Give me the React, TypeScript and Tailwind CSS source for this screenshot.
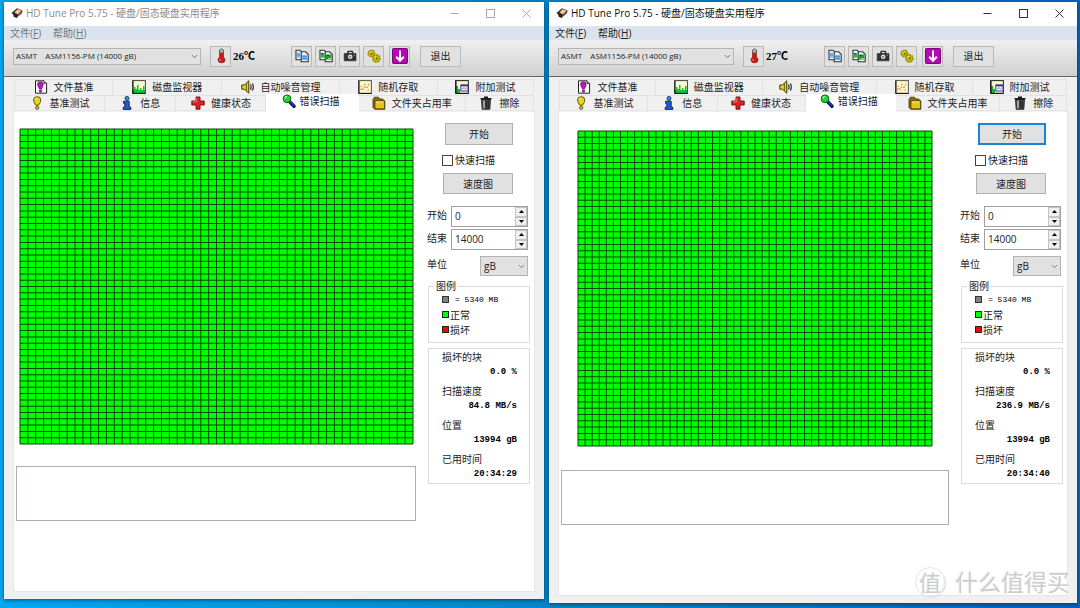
import { useId } from "react"
import type { ReactNode } from "react"
import { ChevronDown } from "lucide-react"

const GRID_SIZE = 50

interface HdTuneWindowProps {
  active?: boolean
  temperature: string
  speed: string
  elapsed: string
  mapClass: string
  logClass: string
}

function DiskIcon() {
  return (
    <svg className="h-3 w-3 shrink-0" viewBox="0 0 12 12" aria-hidden="true">
      <path d="M0.5 6 L6 1.2 L11.6 3.4 L11 6 L5.6 11 L2.6 9.8 L2.2 7.4 Z" fill="#2c2522" />
      <path d="M3.2 5.6 L6.6 2 L11 3.6 L7.2 7.8 Z" fill="#e0a46c" />
      <path d="M4.6 5.2 L6.8 3 L9 3.8 L6.8 6.2 Z" fill="#f4d9b8" />
      <path d="M6 10 L10.8 5.6" stroke="#8a7a70" strokeWidth="0.8" />
    </svg>
  )
}

function ThermometerIcon() {
  return (
    <svg className="h-4 w-3" viewBox="0 0 12 16" aria-hidden="true">
      <path d="M4.6 2.5 Q4.6 1 6.5 1 Q8.4 1 8.4 2.5 V9 Q10 10 10 11.8 Q10 14.8 6.5 14.8 Q3 14.8 3 11.8 Q3 10 4.6 9 Z" fill="#d81414" stroke="#5a2020" strokeWidth="0.7" />
      <path d="M5 2.6 Q5 1.3 6.5 1.3 Q8 1.3 8 2.6 V4.5 H5 Z" fill="#6fd3dc" />
      <path d="M5.2 11 Q4.6 12 5.4 13" stroke="#ff9a9a" strokeWidth="1" fill="none" />
    </svg>
  )
}

function CopyIcon({ picture = false }: { picture?: boolean }) {
  return (
    <svg className="h-[14px] w-[14px]" viewBox="0 0 14 14" aria-hidden="true">
      <path d="M1 1.2 H5 L7 3 V10.8 H1 Z" fill="#f2f6fc" stroke="#333" strokeWidth="1.1" />
      <path d="M6.2 2.8 H10.6 L13.2 5.3 V12.8 H6.2 Z" fill="#f2f6fc" stroke="#333" strokeWidth="1.1" />
      {picture ? (
        <>
          <rect x="1.8" y="4" width="3.9" height="4.6" fill="#2eb82e" />
          <rect x="7" y="5.6" width="5.4" height="5" fill="#1e9a2c" />
          <path d="M2 4.6 H4 M8 6.4 H10" stroke="#174a7a" strokeWidth="1.2" />
          <path d="M9 9.6 H12" stroke="#d8e85a" strokeWidth="0.9" />
        </>
      ) : (
        <>
          <rect x="1.9" y="3.6" width="3.6" height="5" fill="#7db8f4" />
          <rect x="7.2" y="5.8" width="5" height="5.4" fill="#7db8f4" />
          <path d="M7.2 7.6 H12.2 M7.2 9.6 H12.2 M1.9 6 H5.5" stroke="#3a86dc" strokeWidth="0.8" />
        </>
      )}
    </svg>
  )
}

function CameraIcon() {
  return (
    <svg className="h-[14px] w-[14px]" viewBox="0 0 14 14" aria-hidden="true">
      <path d="M1.2 4.6 H4.2 L5 2 H9.6 L10.2 4.6 H13 V11.8 H1.2 Z" fill="#333" stroke="#222" strokeWidth="0.6" strokeLinejoin="round" />
      <circle cx="7.2" cy="7.8" r="2.3" fill="#dedede" />
      <circle cx="7.2" cy="7.8" r="1" fill="#777" />
      <rect x="5.9" y="2.9" width="2.8" height="1.2" fill="#ddd" />
      <rect x="10.8" y="5.6" width="1.2" height="1.2" fill="#3fc04a" />
    </svg>
  )
}

function GearsIcon() {
  return (
    <svg className="h-[14px] w-[14px]" viewBox="0 0 14 14" aria-hidden="true">
      <circle cx="4.4" cy="4.4" r="3.2" fill="#cdb90a" stroke="#9c8e06" strokeWidth="1.6" strokeDasharray="2 0.6" />
      <circle cx="9.4" cy="9.4" r="3.5" fill="#d2be08" stroke="#9c8e06" strokeWidth="1.8" strokeDasharray="2 0.6" />
      <path d="M2.4 3.8 L4.6 2.4 M7 8.6 L9.2 7" stroke="#f0e468" strokeWidth="1" />
      <circle cx="4.6" cy="4.8" r="0.9" fill="#5e5402" />
      <circle cx="9.8" cy="9.6" r="1" fill="#5e5402" />
    </svg>
  )
}

function DownIcon() {
  return (
    <svg className="h-4 w-4" viewBox="0 0 16 16" aria-hidden="true">
      <rect x="0.5" y="0.5" width="15" height="15" rx="0.8" fill="#b408b4" stroke="#7a067a" />
      <path d="M8 2.5 V12.5 M4.2 8.8 L8 12.8 L11.8 8.8" stroke="#fff" strokeWidth="2" fill="none" />
    </svg>
  )
}

// タブのアイコン
const tabIcons = {
  fileBenchmark: (
    <>
      <path d="M1.5 0.8 H10 L12.6 3.4 V13.2 H1.5 Z" fill="#fff" stroke="#222" />
      <path d="M10 0.8 V3.4 H12.6" fill="#aaa" stroke="#222" strokeWidth="0.8" />
      <path d="M3.6 4 Q3.6 1.8 6.4 1.8 Q9.2 1.8 9.2 4 Q9.2 6 7.4 9 H5.5 Q3.6 6 3.6 4 Z" fill="#c018c8" stroke="#4c0a50" strokeWidth="0.7" />
      <circle cx="6.5" cy="11.1" r="1.4" fill="#c018c8" stroke="#4c0a50" strokeWidth="0.5" />
    </>
  ),
  diskMonitor: (
    <>
      <rect x="0.6" y="0.6" width="12.8" height="12.8" fill="#fafbd0" stroke="#444" />
      <path d="M1 10 H13 V13 H1 Z" fill="#1a6fc4" />
      <path d="M2 13 V7 H3.5 V9 H5 V5 H6.5 V10 H8 V8 H9.5 V10 H11 V6 H12.5 V13 Z" fill="#18c428" />
      <path d="M1 1 V13.4 H13.4" stroke="#111" fill="none" />
    </>
  ),
  noise: (
    <>
      <path d="M0.8 5 H3.4 L7.8 0.8 V13.2 L3.4 9.2 H0.8 Z" fill="#e8d818" stroke="#3c3600" strokeWidth="1" />
      <path d="M5.4 3.4 V10.8" stroke="#6d6400" strokeWidth="1" />
      <path d="M9.4 4.5 Q10.8 7 9.4 9.5 M11.2 3.4 Q13.6 7 11.2 10.6" stroke="#444" strokeWidth="1.4" fill="none" />
    </>
  ),
  random: (
    <>
      <rect x="0.6" y="0.6" width="12.8" height="12.8" fill="#fdf8c4" stroke="#555" />
      <path d="M2 10 L4 8 L5 10 L7 6 L9 8 L11.5 3" stroke="#e05050" strokeDasharray="1 0.8" fill="none" />
      <path d="M2.5 6.5 H4 M6 4.5 H7.5 M9.5 10 H11" stroke="#e0902a" strokeWidth="1.2" />
      <path d="M1 1 V13.4 H13.4" stroke="#111" fill="none" />
    </>
  ),
  extra: (
    <>
      <rect x="0.6" y="0.6" width="12.8" height="12.8" fill="#f6f7c8" stroke="#222" />
      <path d="M1 13 V6 H3 V9 H5 V13 Z" fill="#18b428" />
      <rect x="5.8" y="5" width="7.2" height="6" fill="#f4f0ff" stroke="#2848a8" />
      <path d="M6 5.5 H13" stroke="#283878" strokeWidth="1.6" />
      <path d="M7 9 L9 7.6 L10.5 9 L12 7.6" stroke="#e04070" fill="none" strokeWidth="0.8" />
      <path d="M1 1 V13.4 H13.4" stroke="#111" fill="none" />
    </>
  ),
  benchmark: (
    <>
      <path d="M3.6 3.8 Q3.6 0.7 7.2 0.7 Q10.8 0.7 10.8 3.8 Q10.8 6.4 8.6 9.2 H5.8 Q3.6 6.4 3.6 3.8 Z" fill="#e8d610" stroke="#4e4600" strokeWidth="0.9" />
      <circle cx="7.2" cy="11.8" r="1.6" fill="#e8d610" stroke="#4e4600" strokeWidth="0.9" />
      <path d="M5.4 3.2 Q5.8 2 7 2" stroke="#fffbc0" fill="none" />
    </>
  ),
  info: (
    <>
      <circle cx="7" cy="2.4" r="2" fill="#2a96ec" stroke="#0a2450" strokeWidth="0.8" />
      <path d="M3.6 5.2 H9.2 V11.2 H10.8 V13.4 H3.2 V11.2 H4.8 V7.4 H3.6 Z" fill="#1c5ce0" stroke="#0a1c48" strokeWidth="0.9" />
    </>
  ),
  health: (
    <>
      <path d="M5 1 H9 V5 H13.2 V9 H9 V13.2 H5 V9 H0.8 V5 H5 Z" fill="#dc2222" stroke="#6a1010" strokeWidth="0.9" />
      <path d="M5.8 2 V5.8 H2" stroke="#ff8c8c" strokeWidth="0.8" fill="none" />
    </>
  ),
  errorScan: (
    <>
      <path d="M7.6 7.6 L12 12.2" stroke="#080c50" strokeWidth="3.4" strokeLinecap="round" />
      <path d="M8.4 8 L12 11.8" stroke="#2448d0" strokeWidth="1.2" strokeLinecap="round" />
      <circle cx="5" cy="4.8" r="3.9" fill="#1fd62c" stroke="#134a18" strokeWidth="0.9" />
      <path d="M2.8 4.4 Q3.2 2.6 5 2.4" stroke="#c4ffc8" strokeWidth="1.1" fill="none" />
    </>
  ),
  folder: (
    <>
      <path d="M1 3.6 L2.4 1.2 H6.4 L7.6 3 H11 V5 H12.8 V13.2 H3 L1 11.6 Z" fill="#8a7000" stroke="#3c3000" strokeWidth="0.8" />
      <rect x="3" y="4.8" width="9.6" height="8" fill="#e6c41c" stroke="#4e4000" strokeWidth="0.8" />
      <path d="M4 6 H11" stroke="#fbeb8c" />
    </>
  ),
  erase: (
    <>
      <path d="M1.5 2.8 H12.5 M5 1.2 H9" stroke="#1a1a1a" strokeWidth="1.5" />
      <path d="M2.6 3.6 H11.4 L10.8 13.2 H3.2 Z" fill="#555" stroke="#111" strokeWidth="0.9" />
      <path d="M5 4.6 V12.4" stroke="#ddd" strokeWidth="1.1" />
      <path d="M7.2 4.6 V12.4 M9.2 4.6 V12.4" stroke="#161616" strokeWidth="1" />
    </>
  ),
}

interface TabProps {
  icon: keyof typeof tabIcons
  selected?: boolean
  children: ReactNode
}

function Tab({ icon, selected = false, children }: TabProps) {
  return (
    <button
      type="button"
      role="tab"
      aria-selected={selected}
      className={
        selected
          ? "relative -mt-px flex items-center justify-center gap-1 whitespace-nowrap bg-white pr-1 pb-1"
          : "flex items-center justify-center gap-1.5 whitespace-nowrap border-t border-r border-[#e2e2e2] bg-[#f0f0f0] pb-0.5"
      }
    >
      <svg className="h-[14px] w-[14px] shrink-0" viewBox="0 0 14 14" aria-hidden="true">
        {tabIcons[icon]}
      </svg>
      <span>{children}</span>
    </button>
  )
}

function ToolButton({ label, children }: { label: string; children: ReactNode }) {
  return (
    <button
      type="button"
      aria-label={label}
      className="flex h-[21px] w-[21px] shrink-0 items-center justify-center border border-[#b9b9b9] bg-[#e1e1e1]"
    >
      {children}
    </button>
  )
}

function BlockMap({ className }: { className: string }) {
  const lines = Array.from({ length: GRID_SIZE + 1 }, (_, i) => `M${i} 0V${GRID_SIZE}M0 ${i}H${GRID_SIZE}`).join("")

  return (
    <div className={className}>
      <svg
        className="block h-[315px] w-full overflow-visible bg-[#00ff00]"
        viewBox={`0 0 ${GRID_SIZE} ${GRID_SIZE}`}
        preserveAspectRatio="none"
        aria-hidden="true"
      >
        <path d={lines} stroke="#004a00" strokeWidth="1" vectorEffect="non-scaling-stroke" fill="none" />
      </svg>
    </div>
  )
}

function SpinField({ label, value }: { label: string; value: string }) {
  const id = useId()

  return (
    <div className="flex h-[21px] items-center">
      <label htmlFor={id} className="w-6 shrink-0 whitespace-nowrap pb-1">{label}</label>
      <div className="flex h-full min-w-0 flex-1 border border-[#a0a0a0] bg-white">
        <input id={id} type="text" defaultValue={value} className="w-full min-w-0 flex-1 px-[3px] pb-0.5 text-[10px] text-[#222] outline-none" />
        <div className="flex w-3 shrink-0 flex-col">
          <button type="button" aria-label={`${label} +`} className="flex flex-1 items-center justify-center border border-[#c4c4c4] bg-[#f0f0f0]">
            <svg className="h-[3px] w-[5px]" viewBox="0 0 5 3" aria-hidden="true"><path d="M0 3 L2.5 0 L5 3 Z" /></svg>
          </button>
          <button type="button" aria-label={`${label} -`} className="flex flex-1 items-center justify-center border border-[#c4c4c4] bg-[#f0f0f0]">
            <svg className="h-[3px] w-[5px]" viewBox="0 0 5 3" aria-hidden="true"><path d="M0 0 L2.5 3 L5 0 Z" /></svg>
          </button>
        </div>
      </div>
    </div>
  )
}

function Stat({ label, value }: { label: string; value: string }) {
  return (
    <div>
      <dt className="leading-4">{label}</dt>
      <dd className="text-right font-['Liberation_Mono',monospace] text-[9px] leading-[14px] font-bold text-black">{value}</dd>
    </div>
  )
}

function HdTuneWindow({ active = false, temperature, speed, elapsed, mapClass, logClass }: HdTuneWindowProps) {
  const id = useId()
  const titleColor = active ? "text-[#111]" : "text-[#8c8c8c]"
  const menuColor = active ? "text-[#222]" : "text-[#777]"
  const controlColor = active ? "text-[#333]" : "text-[#a8a8a8]"

  return (
    <section className="min-w-0 bg-[#f0f0f0] text-[10px] leading-[14px] text-[#222] shadow-[0_1px_4px_rgba(0,0,0,0.5)]">
      <header className={`flex h-6 items-center bg-white pb-0.5 ${titleColor}`}>
        <div className="flex min-w-0 flex-1 items-center gap-[3px] pl-[7px]">
          <DiskIcon />
          <h1 className="truncate">HD Tune Pro 5.75 - 硬盘/固态硬盘实用程序</h1>
        </div>
        <div className={`flex h-full ${controlColor}`}>
          <button type="button" aria-label="最小化" className="flex w-9 items-center justify-center">
            <svg className="h-[9px] w-[9px]" viewBox="0 0 9 9" fill="none" stroke="currentColor"><path d="M0.5 4.5 H8.5" /></svg>
          </button>
          <button type="button" aria-label="最大化" className="flex w-9 items-center justify-center">
            <svg className="h-[9px] w-[9px]" viewBox="0 0 9 9" fill="none" stroke="currentColor"><rect x="0.5" y="0.5" width="8" height="8" /></svg>
          </button>
          <button type="button" aria-label="关闭" className="flex w-9 items-center justify-center">
            <svg className="h-[9px] w-[9px]" viewBox="0 0 9 9" fill="none" stroke="currentColor"><path d="M0.5 0.5 L8.5 8.5 M8.5 0.5 L0.5 8.5" /></svg>
          </button>
        </div>
      </header>

      <nav className={`flex h-[14px] gap-3 bg-[#dbe3ee] pl-1.5 ${menuColor}`}>
        <button type="button">文件(<u>F</u>)</button>
        <button type="button">帮助(<u>H</u>)</button>
      </nav>

      <div className="flex h-[37px] items-center border-b border-[#666] bg-linear-to-b from-[#f0f0f0] to-[#d0d0d0] pr-[83px] pb-1 pl-[9px]">
        <div className="relative min-w-0 flex-1">
          <select aria-label="硬盘" className="block h-[17px] w-full appearance-none border border-[#b4b4b4] bg-[#e1e1e1] px-0.5 text-[8px]">
            <option>{"ASMT\u00a0\u00a0\u00a0\u00a0ASM1156-PM (14000 gB)"}</option>
          </select>
          <ChevronDown className="pointer-events-none absolute top-1 right-0.5 h-[9px] w-[9px] text-[#555]" />
        </div>
        <div className="ml-[9px] flex w-[81px] shrink-0 items-center gap-0.5">
          <ToolButton label="温度"><ThermometerIcon /></ToolButton>
          <span className="font-['Liberation_Serif','Noto_Sans_CJK_SC',serif] text-[11px] font-bold text-black">{temperature}</span>
        </div>
        <div className="flex shrink-0 gap-[3px]">
          <ToolButton label="复制文本"><CopyIcon /></ToolButton>
          <ToolButton label="复制图像"><CopyIcon picture /></ToolButton>
          <ToolButton label="截图"><CameraIcon /></ToolButton>
          <ToolButton label="选项"><GearsIcon /></ToolButton>
        </div>
        <div className="ml-[5px] flex shrink-0 gap-2.5">
          <ToolButton label="保存"><DownIcon /></ToolButton>
          <button type="button" className="h-[21px] w-[41px] border border-[#b9b9b9] bg-[#e1e1e1]">退出</button>
        </div>
      </div>

      <div className="px-2.5 pt-0.5 pb-2">
        <div role="tablist" className="border-l border-[#e2e2e2]">
          <div className="grid h-4 grid-cols-[98fr_109fr_117fr_98fr_96fr]">
            <Tab icon="fileBenchmark">文件基准</Tab>
            <Tab icon="diskMonitor">磁盘监视器</Tab>
            <Tab icon="noise">自动噪音管理</Tab>
            <Tab icon="random">随机存取</Tab>
            <Tab icon="extra">附加测试</Tab>
          </div>
          <div className="grid h-4 grid-cols-[90fr_71fr_90fr_92fr_107fr_68fr]">
            <Tab icon="benchmark">基准测试</Tab>
            <Tab icon="info">信息</Tab>
            <Tab icon="health">健康状态</Tab>
            <Tab icon="errorScan" selected>错误扫描</Tab>
            <Tab icon="folder">文件夹占用率</Tab>
            <Tab icon="erase">擦除</Tab>
          </div>
        </div>

        <div role="tabpanel" className="flex bg-white pr-1 pb-[70px] outline outline-[#e6e6e6]">
          <div className="min-w-0 flex-1">
            <BlockMap className={mapClass} />
            <div className={`mr-[11px] ml-0.5 h-[55px] border border-[#a9adb5] bg-white ${logClass}`} />
          </div>

          <div className="w-[103px] shrink-0 pt-3">
            <div className="flex flex-col pl-4">
              <button
                type="button"
                className={
                  active
                    ? "ml-0.5 h-[22px] w-[68px] border-2 border-[#1883d7] bg-[#e1e1e1]"
                    : "ml-0.5 h-[22px] w-[68px] border border-[#b0b0b0] bg-[#e1e1e1]"
                }
              >
                开始
              </button>
              <label className="mt-2 -ml-px flex items-center gap-0.5">
                <input type="checkbox" className="h-[11px] w-[11px] appearance-none border border-[#444] bg-white" />
                快速扫描
              </label>
              <button type="button" className="mt-1.5 h-[21px] w-[70px] border border-[#b0b0b0] bg-[#e1e1e1]">速度图</button>
            </div>

            <div className="mt-3 flex flex-col gap-0.5 pr-0.5">
              <SpinField label="开始" value="0" />
              <SpinField label="结束" value="14000" />
            </div>

            <div className="mt-1.5 flex h-5 items-center justify-between pr-0.5">
              <label htmlFor={`${id}-unit`} className="pb-1">单位</label>
              <div className="relative">
                <select id={`${id}-unit`} className="block h-5 w-12 appearance-none border border-[#b4b4b4] bg-[#e1e1e1] px-[3px] text-[10px]">
                  <option>gB</option>
                </select>
                <ChevronDown className="pointer-events-none absolute top-1.5 right-0.5 h-[9px] w-[9px] text-[#555]" />
              </div>
            </div>

            <fieldset className="mt-[3px] ml-px h-16 border border-[#dcdcdc] pl-[13px]">
              <legend className="-ml-2 bg-white px-0.5">图例</legend>
              <ul className="-mt-px">
                <li className="flex h-[15px] items-center gap-1.5 whitespace-pre font-['Liberation_Mono',monospace] text-[8px] text-black">
                  <span className="h-[7px] w-[7px] border border-[#333] bg-[#808080]" />= 5340 MB
                </li>
                <li className="flex h-[15px] items-center gap-px">
                  <span className="h-[7px] w-[7px] border border-[#222] bg-[#00ff00]" />正常
                </li>
                <li className="flex h-[15px] items-center gap-px">
                  <span className="h-[7px] w-[7px] border border-[#222] bg-[#ff0000]" />损坏
                </li>
              </ul>
            </fieldset>

            <dl className="mt-[5px] ml-px flex flex-col gap-1 border border-[#dcdcdc] pr-3 pb-0.5 pl-[13px]">
              <Stat label="损坏的块" value="0.0 %" />
              <Stat label="扫描速度" value={speed} />
              <Stat label="位置" value="13994 gB" />
              <Stat label="已用时间" value={elapsed} />
            </dl>
          </div>
        </div>
      </div>
    </section>
  )
}

export default function App() {
  return (
    <main className="relative grid min-h-screen grid-cols-[540fr_528fr] items-start gap-[5px] bg-linear-to-r from-[#00a8f4] via-[#0487cc] to-[#0464c4] pt-0.5 pr-[3px] pb-1 pl-1 font-['Open_Sans','Noto_Sans_CJK_SC',sans-serif]">
      <HdTuneWindow
        temperature="26℃"
        speed="84.8 MB/s"
        elapsed="20:34:29"
        mapClass="mt-[18px] mr-[14px] ml-1.5"
        logClass="mt-[22px]"
      />
      <HdTuneWindow
        active
        temperature="27℃"
        speed="236.9 MB/s"
        elapsed="20:34:40"
        mapClass="mt-5 mr-7 ml-[19px]"
        logClass="mt-6"
      />
      <div className="pointer-events-none absolute right-2.5 bottom-2.5 flex items-center gap-2.5 text-[#cdcdcd] [text-shadow:1px_1px_1px_#fff,-1px_-1px_0_#f4f4f4]">
        <span className="flex h-[30px] w-[30px] items-center justify-center rounded-full border border-[#e6e6e6] text-[22px] leading-none shadow-[1px_1px_1px_#ddd]">值</span>
        <span className="text-[23px] leading-8">什么值得买</span>
      </div>
    </main>
  )
}
